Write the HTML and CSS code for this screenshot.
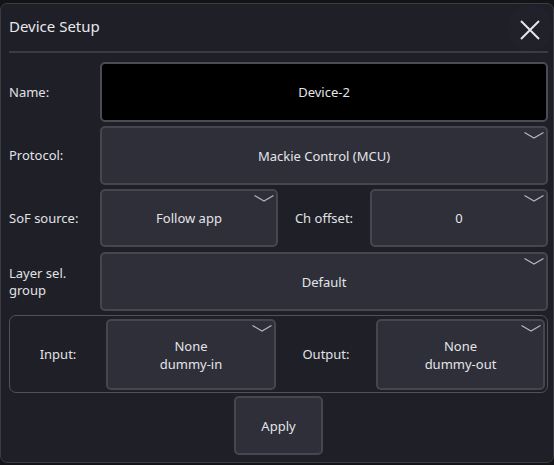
FILE: index.html
```html
<!DOCTYPE html>
<html>
<head>
<meta charset="utf-8">
<link rel="stylesheet" href="styles.css">
</head>
<body>
<div class="dialog">
  <div class="header">
    <div class="title">Device Setup</div>
    <button class="close" aria-label="Close">
      <svg width="20" height="20" viewBox="0 0 20 20"><path d="M1 1 L19 19 M19 1 L1 19" stroke="#e6e6e8" stroke-width="2" fill="none"/></svg>
    </button>
  </div>
  <div class="sep"></div>
  <div class="body">
    <div class="row r-name">
      <div class="label">Name:</div>
      <div class="field name">Device-2</div>
    </div>
    <div class="row r-proto">
      <div class="label">Protocol:</div>
      <div class="field combo">Mackie Control (MCU)<svg class="chev" width="20" height="7" viewBox="0 0 20 7"><path d="M0.5 0.5 L10 6 L19.5 0.5" stroke="#b4b4bc" stroke-width="1.2" fill="none"/></svg></div>
    </div>
    <div class="row r-sof">
      <div class="label">SoF source:</div>
      <div class="field combo">Follow app<svg class="chev" width="20" height="7" viewBox="0 0 20 7"><path d="M0.5 0.5 L10 6 L19.5 0.5" stroke="#b4b4bc" stroke-width="1.2" fill="none"/></svg></div>
      <div class="label center">Ch offset:</div>
      <div class="field combo">0<svg class="chev" width="20" height="7" viewBox="0 0 20 7"><path d="M0.5 0.5 L10 6 L19.5 0.5" stroke="#b4b4bc" stroke-width="1.2" fill="none"/></svg></div>
    </div>
    <div class="row r-layer">
      <div class="label">Layer sel.<br>group</div>
      <div class="field combo">Default<svg class="chev" width="20" height="7" viewBox="0 0 20 7"><path d="M0.5 0.5 L10 6 L19.5 0.5" stroke="#b4b4bc" stroke-width="1.2" fill="none"/></svg></div>
    </div>
    <div class="group">
      <div class="label center">Input:</div>
      <div class="field combo two">None<br>dummy-in<svg class="chev" width="20" height="7" viewBox="0 0 20 7"><path d="M0.5 0.5 L10 6 L19.5 0.5" stroke="#b4b4bc" stroke-width="1.2" fill="none"/></svg></div>
      <div class="label center">Output:</div>
      <div class="field combo two">None<br>dummy-out<svg class="chev" width="20" height="7" viewBox="0 0 20 7"><path d="M0.5 0.5 L10 6 L19.5 0.5" stroke="#b4b4bc" stroke-width="1.2" fill="none"/></svg></div>
    </div>
    <div class="actions">
      <button class="apply">Apply</button>
    </div>
  </div>
</div>
</body>
</html>
```

FILE: styles.css
```css
html, body {
  margin: 0;
  padding: 0;
  background: #141416;
}
body {
  font-family: "Noto Sans", "Open Sans", sans-serif;
  font-size: 13px;
  color: #e4e4e8;
  width: 554px;
  height: 465px;
  overflow: hidden;
}
.dialog {
  margin-top: 3px;
  width: 554px;
  height: 460px;
  box-sizing: border-box;
  border: 1px solid #3a3b43;
  border-radius: 7px;
  background: #1e1f27;
  position: relative;
  overflow: hidden;
}
.header {
  height: 47px;
  display: flex;
  align-items: center;
  justify-content: space-between;
  padding-left: 8px;
}
.title {
  font-size: 15px;
  color: #e8e8ec;
  margin-top: -4px;
}
.close {
  width: 46px;
  height: 46px;
  border: none;
  border-radius: 50%;
  background: #20212a;
  display: flex;
  align-items: center;
  justify-content: center;
  padding: 0;
  margin-right: 0;
  margin-top: 0;
}
.close svg {
  margin-top: 4px;
}
.sep {
  height: 2px;
  background: #3a3b43;
  margin: 0 5px 0 8px;
}
.body {
  padding: 9px 5px 0 8px;
  display: flex;
  flex-direction: column;
  gap: 4px;
}
.row {
  display: grid;
  grid-template-columns: 91px 1fr;
}
.r-name { height: 60px; }
.r-proto { height: 59px; }
.r-sof {
  height: 58px;
  grid-template-columns: 91px 178px 92px 178px;
}
.r-layer { height: 59px; margin-top: 1px; }
.label {
  display: flex;
  align-items: center;
  line-height: 17px;
  color: #e2e2e6;
}
.label.center {
  justify-content: center;
}
.field {
  position: relative;
  box-sizing: border-box;
  border: 2px solid #45464f;
  border-radius: 5px;
  background: #2e2f39;
  display: flex;
  align-items: center;
  justify-content: center;
  text-align: center;
  line-height: 18px;
}
.field.name {
  background: #000;
  border-color: #4a4b55;
}
.chev {
  position: absolute;
  top: 4px;
  right: 2px;
}
.group {
  height: 78px;
  box-sizing: border-box;
  border: 1px solid #50515a;
  border-radius: 7px;
  display: grid;
  grid-template-columns: 96px 170px 100px 169px;
  padding: 3px 2px 2px 0;
  margin-top: 0;
}
.actions {
  display: flex;
  justify-content: center;
  padding-left: 0;
  margin-top: -1px;
}
.apply {
  width: 89px;
  height: 59px;
  box-sizing: border-box;
  border: 2px solid #45464f;
  border-radius: 5px;
  background: #2e2f39;
  color: #e4e4e8;
  font-family: "Noto Sans", "Open Sans", sans-serif;
  font-size: 13px;
}
```
